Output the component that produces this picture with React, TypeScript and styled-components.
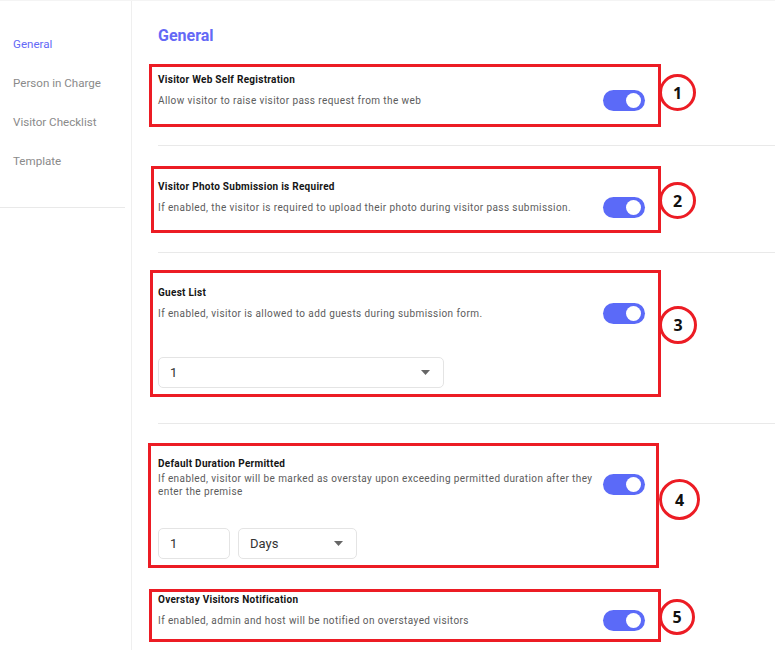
import {FC, ReactNode} from 'react'
import styled, {createGlobalStyle} from 'styled-components'

const COLOR = {
  PRIMARY: '#6469f6',
  TOGGLE: '#5b6af8',
  RED: '#ec1c24',
  TEXT: '#151515',
  TEXT_LIGHT: '#5c5c5c',
  NAV: '#8a8a8a',
  LINE: '#e9e9e9',
  FIELD_BORDER: '#e4e4e4',
}

const GlobalStyle = createGlobalStyle`
  html, body {
    margin: 0;
    background: #fff;
    font-family: Roboto, "Liberation Sans", sans-serif;
  }
`

interface MarkBox {
  left: number
  top: number
  width: number
  height: number
  badgeTop: number
  badgeSize: number
  n: number
}

interface SectionProps {
  title: string
  description: ReactNode
  mark: MarkBox
  top?: number
  bottom?: number
  divider?: boolean
  children?: ReactNode
}

const Toggle: FC = () => (
  <Switch>
    <Knob />
  </Switch>
)

const Arrow: FC = () => (
  <svg width="9" height="5" viewBox="0 0 9 5">
    <path d="M0 0h9L4.5 5z" fill="#666" />
  </svg>
)

const Setting: FC<SectionProps> = ({title, description, mark, top = 34, bottom = 31, divider = true, children}) => (
  <Section $top={top} $bottom={bottom} $divider={divider}>
    <Title>{title}</Title>
    <Row>
      <Description>{description}</Description>
      <Toggle />
    </Row>
    {children}
    <Mark style={{left: mark.left, top: mark.top, width: mark.width, height: mark.height}} />
    <Badge style={{top: mark.badgeTop, width: mark.badgeSize, height: mark.badgeSize}}>{mark.n}</Badge>
  </Section>
)

const App: FC = () => (
  <>
    <GlobalStyle />
    <Page>
      <Sidebar>
        <NavList>
          <NavItem $active>General</NavItem>
          <NavItem>Person in Charge</NavItem>
          <NavItem>Visitor Checklist</NavItem>
          <NavItem>Template</NavItem>
        </NavList>
        <NavRule />
      </Sidebar>
      <Main>
        <Heading>General</Heading>
        <Setting
          top={27}
          title="Visitor Web Self Registration"
          description="Allow visitor to raise visitor pass request from the web"
          mark={{left: -9, top: 18, width: 512, height: 63, badgeTop: 28, badgeSize: 37, n: 1}}
        />
        <Setting
          title="Visitor Photo Submission is Required"
          description="If enabled, the visitor is required to upload their photo during visitor pass submission."
          mark={{left: -7, top: 20, width: 510, height: 67, badgeTop: 36, badgeSize: 37, n: 2}}
        />
        <Setting
          top={33}
          bottom={35}
          title="Guest List"
          description="If enabled, visitor is allowed to add guests during submission form."
          mark={{left: -8, top: 17, width: 511, height: 127, badgeTop: 53, badgeSize: 38, n: 3}}
        >
          <Controls>
            <Select $width={286}>
              <span>1</span>
              <Arrow />
            </Select>
          </Controls>
        </Setting>
        <Setting
          top={33}
          bottom={0}
          divider={false}
          title="Default Duration Permitted"
          description="If enabled, visitor will be marked as overstay upon exceeding permitted duration after they enter the premise"
          mark={{left: -10, top: 19, width: 511, height: 125, badgeTop: 55, badgeSize: 41, n: 4}}
        >
          <Controls>
            <Field $width={72}>1</Field>
            <Select $width={119}>
              <span>Days</span>
              <Arrow />
            </Select>
          </Controls>
        </Setting>
        <Setting
          title="Overstay Visitors Notification"
          description="If enabled, admin and host will be notified on overstayed visitors"
          divider={false}
          mark={{left: -9, top: 30, width: 512, height: 53, badgeTop: 40, badgeSize: 36, n: 5}}
        />
      </Main>
    </Page>
  </>
)

const Page = styled.div`
  display: flex;
  min-height: 650px;
  border-top: 1px solid #f4f4f4;
  box-sizing: border-box;
  overflow: hidden;
`
const Sidebar = styled.aside`
  width: 131px;
  flex-shrink: 0;
  border-right: 1px solid #efefef;
`
const NavList = styled.ul`
  list-style: none;
  margin: 0;
  padding: 24px 0 0;
`
const NavItem = styled.li<{$active?: boolean}>`
  height: 39px;
  line-height: 39px;
  padding-left: 13px;
  font-size: 11.6px;
  color: ${p => (p.$active ? COLOR.PRIMARY : COLOR.NAV)};
`
const NavRule = styled.div`
  width: 125px;
  height: 1px;
  margin-top: 26px;
  background: ${COLOR.LINE};
`
const Main = styled.main`
  flex: 1;
  padding: 25px 0 0 26px;
`
const Heading = styled.h2`
  margin: 0;
  font-size: 16px;
  line-height: 20px;
  font-weight: 700;
  color: ${COLOR.PRIMARY};
`
const Section = styled.div<{$top: number; $bottom: number; $divider: boolean}>`
  position: relative;
  padding: ${p => p.$top}px 0 ${p => p.$bottom}px;
  border-bottom: ${p => (p.$divider ? `1px solid ${COLOR.LINE}` : 'none')};
`
const Title = styled.div`
  font-size: 10px;
  line-height: 14px;
  font-weight: 700;
  letter-spacing: 0.27px;
  color: ${COLOR.TEXT};
`
const Row = styled.div`
  display: grid;
  grid-template-columns: 441px 42px;
  column-gap: 4px;
  align-items: center;
  min-height: 27px;
`
const Description = styled.p`
  margin: 0;
  font-size: 10px;
  line-height: 13px;
  letter-spacing: 0.41px;
  color: ${COLOR.TEXT_LIGHT};
`
const Switch = styled.div`
  position: relative;
  width: 42px;
  height: 21px;
  border-radius: 11px;
  background: ${COLOR.TOGGLE};
`
const Knob = styled.span`
  position: absolute;
  right: 4px;
  top: 3px;
  width: 15px;
  height: 15px;
  border-radius: 50%;
  background: #fff;
`
const Controls = styled.div`
  display: flex;
  gap: 8px;
  margin-top: 30px;
`
const Field = styled.div<{$width: number}>`
  width: ${p => p.$width}px;
  height: 31px;
  box-sizing: border-box;
  border: 1px solid ${COLOR.FIELD_BORDER};
  border-radius: 5px;
  padding: 0 11px;
  display: flex;
  align-items: center;
  font-size: 13px;
  color: #333;
`
const Select = styled(Field)`
  justify-content: space-between;
  padding-right: 13px;
`
const Mark = styled.div`
  position: absolute;
  box-sizing: border-box;
  border: 3px solid ${COLOR.RED};
  pointer-events: none;
`
const Badge = styled.div`
  position: absolute;
  left: 501px;
  box-sizing: border-box;
  border: 3px solid ${COLOR.RED};
  border-radius: 50%;
  background: #fff;
  display: flex;
  align-items: center;
  justify-content: center;
  font-family: "Open Sans", sans-serif;
  font-weight: 700;
  font-size: 16px;
  color: #111;
`

export default App
